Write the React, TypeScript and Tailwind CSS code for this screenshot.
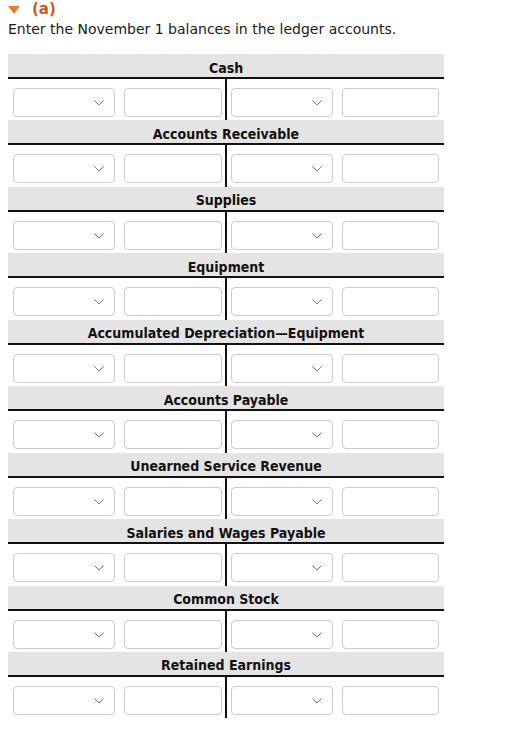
import React from "react";

const accounts = [
  "Cash",
  "Accounts Receivable",
  "Supplies",
  "Equipment",
  "Accumulated Depreciation\u2014Equipment",
  "Accounts Payable",
  "Unearned Service Revenue",
  "Salaries and Wages Payable",
  "Common Stock",
  "Retained Earnings",
];

function Select() {
  return (
    <div className="relative w-[102px] h-[29px] rounded-[4px] border border-[#cccccc] bg-white">
      <svg
        className="absolute right-[10px] top-[11px]"
        width="10"
        height="6"
        viewBox="0 0 10 6"
        fill="none"
      >
        <path d="M0.5 0.5 L5 5 L9.5 0.5" stroke="#777" strokeWidth="1" />
      </svg>
    </div>
  );
}

function Input({ w }: { w: string }) {
  return <div className={`${w} h-[29px] rounded-[4px] border border-[#cccccc] bg-white`} />;
}

export default function App() {
  return (
    <div className="bg-white min-h-[729px] pl-[8px] text-[#1a1a1a]" style={{ fontFamily: '"DejaVu Sans", Verdana, sans-serif' }}>
      <div className="flex items-center h-[18px]">
        <svg width="12" height="8" viewBox="0 0 12 8" className="mr-[12px] mt-[1px]">
          <path d="M0 0 L12 0 L6 8 Z" fill="#f47b20" />
        </svg>
        <span className="text-[15px] font-bold text-[#c75b1c] leading-none">(a)</span>
      </div>
      <div className="text-[14px] leading-[20px] mt-[1px]">Enter the November 1 balances in the ledger accounts.</div>
      <div className="w-[436px] mt-[15px]">
        {accounts.map((a) => (
          <div key={a}>
            <div className="h-[25px] bg-[#e4e4e4] border-b-2 border-[#111] flex items-center justify-center pt-[5px]">
              <span className="text-[14px] font-bold text-[#111]" style={{ fontFamily: '"DejaVu Sans Condensed", "DejaVu Sans", sans-serif' }}>{a}</span>
            </div>
            <div className="flex h-[41.44px]">
              <div className="w-[219px] border-r-2 border-[#111] flex gap-[9px] pl-[5px] pt-[9px]">
                <Select />
                <Input w="w-[98px]" />
              </div>
              <div className="flex gap-[9px] pl-[4px] pt-[9px]">
                <Select />
                <Input w="w-[97px]" />
              </div>
            </div>
          </div>
        ))}
      </div>
    </div>
  );
}
